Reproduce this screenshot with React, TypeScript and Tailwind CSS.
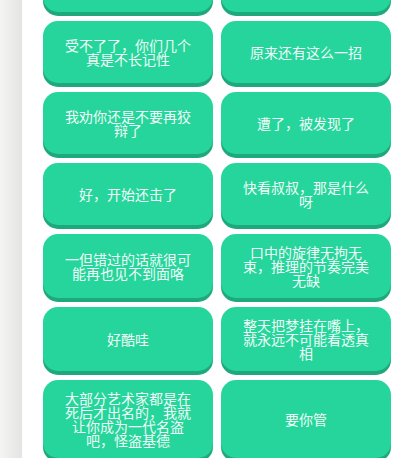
const lines: [string, string][] = [
  ["受不了了，你们几个真是不长记性", "原来还有这么一招"],
  ["我劝你还是不要再狡辩了", "遭了，被发现了"],
  ["好，开始还击了", "快看叔叔，那是什么呀"],
  ["一但错过的话就很可能再也见不到面咯", "口中的旋律无拘无束，推理的节奏完美无缺"],
  ["好酷哇", "整天把梦挂在嘴上，就永远不可能看透真相"],
  ["大部分艺术家都是在死后才出名的，我就让你成为一代名盗吧，怪盗基德", "要你管"],
];

function QuoteButton({ text }: { text?: string }) {
  return (
    <button className="flex min-h-[62px] w-full items-center justify-center rounded-[15px] bg-[#25d59b] px-[20px] py-[11px] text-center text-[14px] leading-[14px] text-[#f0fcf7] shadow-[0_4px_0_#1fa87b]">
      {text}
    </button>
  );
}

export default function App() {
  return (
    <div
      className="flex h-[458px] w-[420px] overflow-hidden bg-white"
      style={{ fontFamily: '"Noto Sans CJK SC", "Noto Sans", sans-serif' }}
    >
      {/* side rail */}
      <div className="h-full w-[22px] shrink-0 bg-gradient-to-r from-[#f4f4f2] to-[#e4e4e2]" />

      <div className="ml-[21px] mt-[-50px] grid h-fit w-[348px] grid-cols-2 gap-x-[8px] gap-y-[9px]">
        {/* row scrolled past the top */}
        <QuoteButton />
        <QuoteButton />
        {lines.map(([a, b], i) => (
          <div key={i} className="contents">
            <QuoteButton text={a} />
            <QuoteButton text={b} />
          </div>
        ))}
      </div>
    </div>
  );
}
